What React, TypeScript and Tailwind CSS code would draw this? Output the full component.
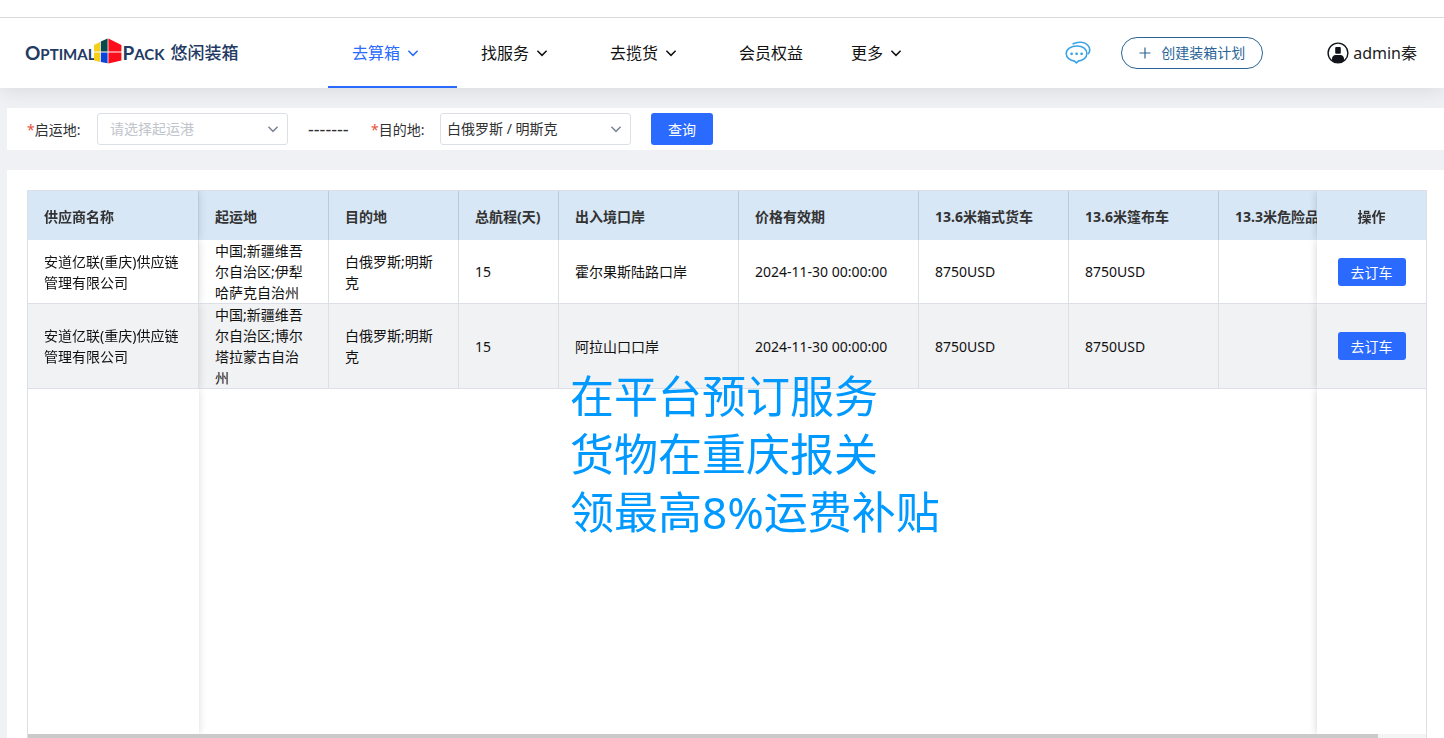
import { useState } from "react";
import type { ReactNode } from "react";

const navItems = [
  { label: "去算箱", menu: true },
  { label: "找服务", menu: true },
  { label: "去揽货", menu: true },
  { label: "会员权益", menu: false },
  { label: "更多", menu: true },
];

const columns = [
  { label: "供应商名称", width: "w-[171px]" },
  { label: "起运地", width: "w-[130px]" },
  { label: "目的地", width: "w-[130px]" },
  { label: "总航程(天)", width: "w-[100px]" },
  { label: "出入境口岸", width: "w-[180px]" },
  { label: "价格有效期", width: "w-[180px]" },
  { label: "13.6米箱式货车", width: "w-[150px]" },
  { label: "13.6米篷布车", width: "w-[150px]" },
  { label: "13.3米危险品车", width: "w-[150px]" },
  { label: "操作", width: "w-[109px]" },
];

const rows = [
  {
    supplier: "安道亿联(重庆)供应链管理有限公司",
    from: "中国;新疆维吾尔自治区;伊犁哈萨克自治州",
    to: "白俄罗斯;明斯克",
    days: 15,
    port: "霍尔果斯陆路口岸",
    validity: "2024-11-30 00:00:00",
    box: "8750USD",
    tarp: "8750USD",
  },
  {
    supplier: "安道亿联(重庆)供应链管理有限公司",
    from: "中国;新疆维吾尔自治区;博尔塔拉蒙古自治州",
    to: "白俄罗斯;明斯克",
    days: 15,
    port: "阿拉山口口岸",
    validity: "2024-11-30 00:00:00",
    box: "8750USD",
    tarp: "8750USD",
  },
];

const stickyLeft = "sticky left-0 z-10 shadow-[0_0_8px_rgba(0,0,0,0.14)] [clip-path:inset(0_-10px_0_0)]";
const stickyRight = "sticky right-0 z-10 shadow-[0_0_8px_rgba(0,0,0,0.18)] [clip-path:inset(0_0_0_-10px)]";

const Chevron = ({ className }: { className: string }) => (
  <svg viewBox="0 0 12 12" fill="none" className={className}>
    <path d="M1.4 3.8L6 8.4l4.6-4.6" stroke="currentColor" strokeWidth="1.5" />
  </svg>
);

const LogoMark = () => (
  <svg viewBox="0 0 28 26" className="w-7 h-[26px] -mt-1 -ml-px">
    <path d="M0 7L6 4v9.4H0z" fill="#f5cf1c" />
    <path d="M0 14.4h6V24l-6-1.6z" fill="#f5cf1c" />
    <path d="M6.8 3.6L13.6 0.6v12.8H6.8z" fill="#0c4a4a" />
    <path d="M6.8 14.4h6.8v10.8l-6.8-1.2z" fill="#0a45d8" />
    <path d="M14.4 0.4L27.4 7v6.4h-13z" fill="#fb0d1b" />
    <path d="M14.4 14.4h13v8L14.4 25.4z" fill="#fb0d1b" />
  </svg>
);

const ChatIcon = () => (
  <svg viewBox="0 0 26 24" fill="none" className="w-[26px] h-6">
    <path
      d="M12 5C5.9 5 1.2 8.3 1.2 12.6c0 3.9 3.6 6.9 8.4 7.5L11.4 22l1.8-1.9c5-.5 8.7-3.6 8.7-7.5C21.9 8.3 18 5 12 5z"
      stroke="#3ba3e6"
      strokeWidth="1.6"
      strokeLinejoin="round"
    />
    <path d="M8.2 2.8c4.8-2.6 11.4-2 14.6 1.4 2.6 2.8 2.2 6 .7 8.4" stroke="#3ba3e6" strokeWidth="1.6" strokeLinecap="round" />
    <circle cx="6.6" cy="12.8" r="1.4" fill="#3ba3e6" />
    <circle cx="11.6" cy="12.8" r="1.4" fill="#3ba3e6" />
    <circle cx="16.6" cy="12.8" r="1.4" fill="#3ba3e6" />
  </svg>
);

const UserIcon = () => (
  <svg viewBox="0 0 22 22" fill="none" className="w-[22px] h-[22px]">
    <circle cx="11" cy="11" r="9.9" stroke="#10131a" strokeWidth="1.4" />
    <rect x="8.2" y="5" width="5.6" height="6.8" rx="1" fill="#10131a" />
    <path d="M5 18.4v-1.6c0-2 1.4-3.8 3.6-3.8h4.8c2.2 0 3.6 1.8 3.6 3.8v1.6A9.6 9.6 0 0 1 11 21a9.6 9.6 0 0 1-6-2.6z" fill="#10131a" />
  </svg>
);

type PortSelectProps = {
  id: string;
  value: string;
  onChange: (value: string) => void;
  placeholder: boolean;
  children: ReactNode;
};

const PortSelect = ({ id, value, onChange, placeholder, children }: PortSelectProps) => (
  <div className="relative">
    <select
      id={id}
      value={value}
      onChange={(e) => onChange(e.target.value)}
      className={`block w-[191px] h-8 appearance-none rounded-[3px] border border-[#dcdfe6] bg-white pr-8 text-sm outline-none ${
        placeholder ? "pl-3 text-[#c0c4cc]" : "pl-[6px] text-[#303133]"
      }`}
    >
      {children}
    </select>
    <Chevron className="pointer-events-none absolute right-[9px] top-[10px] w-3 h-3 text-[#7d8794]" />
  </div>
);

export default function App() {
  const [active, setActive] = useState("去算箱");
  const [from, setFrom] = useState("");
  const [to, setTo] = useState("minsk");

  return (
    <div className="flex h-screen flex-col overflow-hidden bg-[#f0f1f5] font-['Noto_Sans','Noto_Sans_CJK_SC',sans-serif] text-sm text-[#111]">
      <header className="flex h-[88px] shrink-0 flex-col bg-white shadow-[0_2px_20px_rgba(0,0,0,0.1)]">
        <div className="h-[18px] border-b border-[#d9d9dc]" />
        <div className="flex flex-1 items-stretch pl-[25px] pr-[27px]">
          <a href="#" className="flex w-[303px] items-center whitespace-nowrap text-[#233a63]">
            <span className="font-['Lato',sans-serif] text-[19px] font-bold">
              O<span className="text-[15px]">PTIMAL</span>
            </span>
            <LogoMark />
            <span className="font-['Lato',sans-serif] text-[19px] font-bold">
              P<span className="text-[15px]">ACK</span>
            </span>
            <span className="ml-[6px] text-[17px] font-medium">悠闲装箱</span>
          </a>

          <nav className="flex">
            {navItems.map((item) => (
              <button
                key={item.label}
                onClick={() => setActive(item.label)}
                className={`flex items-center gap-[7px] whitespace-nowrap border-b-2 pl-6 pt-[2px] text-base ${
                  item.menu ? "pr-[38px]" : "pr-6"
                } ${active === item.label ? "border-[#2a6aff] text-[#2a6aff]" : "border-transparent text-[#111]"}`}
              >
                {item.label}
                {item.menu && <Chevron className="w-3 h-3" />}
              </button>
            ))}
          </nav>

          <div className="ml-auto flex items-center">
            <button aria-label="消息">
              <ChatIcon />
            </button>
            <button className="ml-[30px] flex h-8 w-[142px] items-center justify-center gap-[10px] rounded-full border border-[#2a6496] text-[#2a6496]">
              <svg viewBox="0 0 12 12" className="w-3 h-3" stroke="currentColor" strokeWidth="1.2">
                <path d="M6 0.5v11M0.5 6h11" />
              </svg>
              创建装箱计划
            </button>
            <a href="#" className="ml-16 flex items-center gap-1 text-base text-[#222]">
              <UserIcon />
              admin秦
            </a>
          </div>
        </div>
      </header>

      <form onSubmit={(e) => e.preventDefault()} className="ml-[7px] mt-5 flex h-[42px] shrink-0 items-center bg-white pl-5">
        <label htmlFor="from" className="w-[70px] pt-[2px] text-[#303133]">
          <span className="text-[#e8503a]">*</span>启运地:
        </label>
        <PortSelect id="from" value={from} onChange={setFrom} placeholder={from === ""}>
          <option value="">请选择起运港</option>
          <option value="chongqing">中国 / 重庆</option>
        </PortSelect>
        <span className="mx-5 w-[43px] whitespace-nowrap text-lg text-[#303133]">-------</span>
        <label htmlFor="to" className="w-[69px] pt-[2px] text-[#303133]">
          <span className="text-[#e8503a]">*</span>目的地:
        </label>
        <PortSelect id="to" value={to} onChange={setTo} placeholder={to === ""}>
          <option value="minsk">白俄罗斯 / 明斯克</option>
        </PortSelect>
        <button type="submit" className="ml-5 h-8 w-[62px] rounded-[3px] bg-[#2a6aff] pt-px text-white">
          查询
        </button>
      </form>

      <main className="relative ml-[7px] mt-5 min-h-0 flex-1 bg-white pl-5 pr-[17px] pt-5">
        <div className="flex h-full flex-col border border-b-0 border-[#dcdfe6]">
          <div className="min-h-0 flex-1 overflow-hidden">
            <table className="h-full w-full min-w-[1450px] table-fixed border-separate border-spacing-0 text-left leading-[21px]">
              <thead>
                <tr className="h-[49px]">
                  {columns.map((col, i) => (
                    <th
                      key={col.label}
                      className={`whitespace-nowrap bg-[#d8e7f6] px-4 pt-[2px] font-bold text-[#333] ${col.width} ${
                        i === 0 ? stickyLeft : ""
                      } ${i === columns.length - 1 ? `${stickyRight} text-center` : "border-r border-[#bccbdc]"}`}
                    >
                      {col.label}
                    </th>
                  ))}
                </tr>
              </thead>
              <tbody>
                {rows.map((row, i) => {
                  const bg = i % 2 ? "bg-[#f1f2f4]" : "bg-white";
                  const cell = `border-b border-r border-[#dcdfe6] px-4 ${bg}`;
                  return (
                    <tr key={row.port}>
                      <td className={`${cell} ${stickyLeft}`}>{row.supplier}</td>
                      <td className={cell}>{row.from}</td>
                      <td className={cell}>{row.to}</td>
                      <td className={cell}>{row.days}</td>
                      <td className={cell}>{row.port}</td>
                      <td className={`${cell} whitespace-nowrap`}>{row.validity}</td>
                      <td className={cell}>{row.box}</td>
                      <td className={cell}>{row.tarp}</td>
                      <td className={cell} />
                      <td className={`border-b border-[#dcdfe6] text-center ${bg} ${stickyRight}`}>
                        <button className="h-7 w-[68px] rounded-[3px] bg-[#2a6aff] pt-px align-middle text-white">去订车</button>
                      </td>
                    </tr>
                  );
                })}
                <tr className="h-full">
                  <td className={`bg-white ${stickyLeft}`} />
                  <td colSpan={8} />
                  <td className={`bg-white ${stickyRight}`} />
                </tr>
              </tbody>
            </table>
          </div>
          <div className="h-1 shrink-0 bg-[#f3f5f5]">
            <div className="h-full w-[1350px] max-w-full bg-[#cacaca]" />
          </div>
        </div>

        <div className="pointer-events-none absolute left-[563px] top-[197px] z-20 whitespace-nowrap text-[44px] leading-[58px] text-[#0099ff]">
          <p>在平台预订服务</p>
          <p>货物在重庆报关</p>
          <p>领最高8%运费补贴</p>
        </div>
      </main>
    </div>
  );
}
